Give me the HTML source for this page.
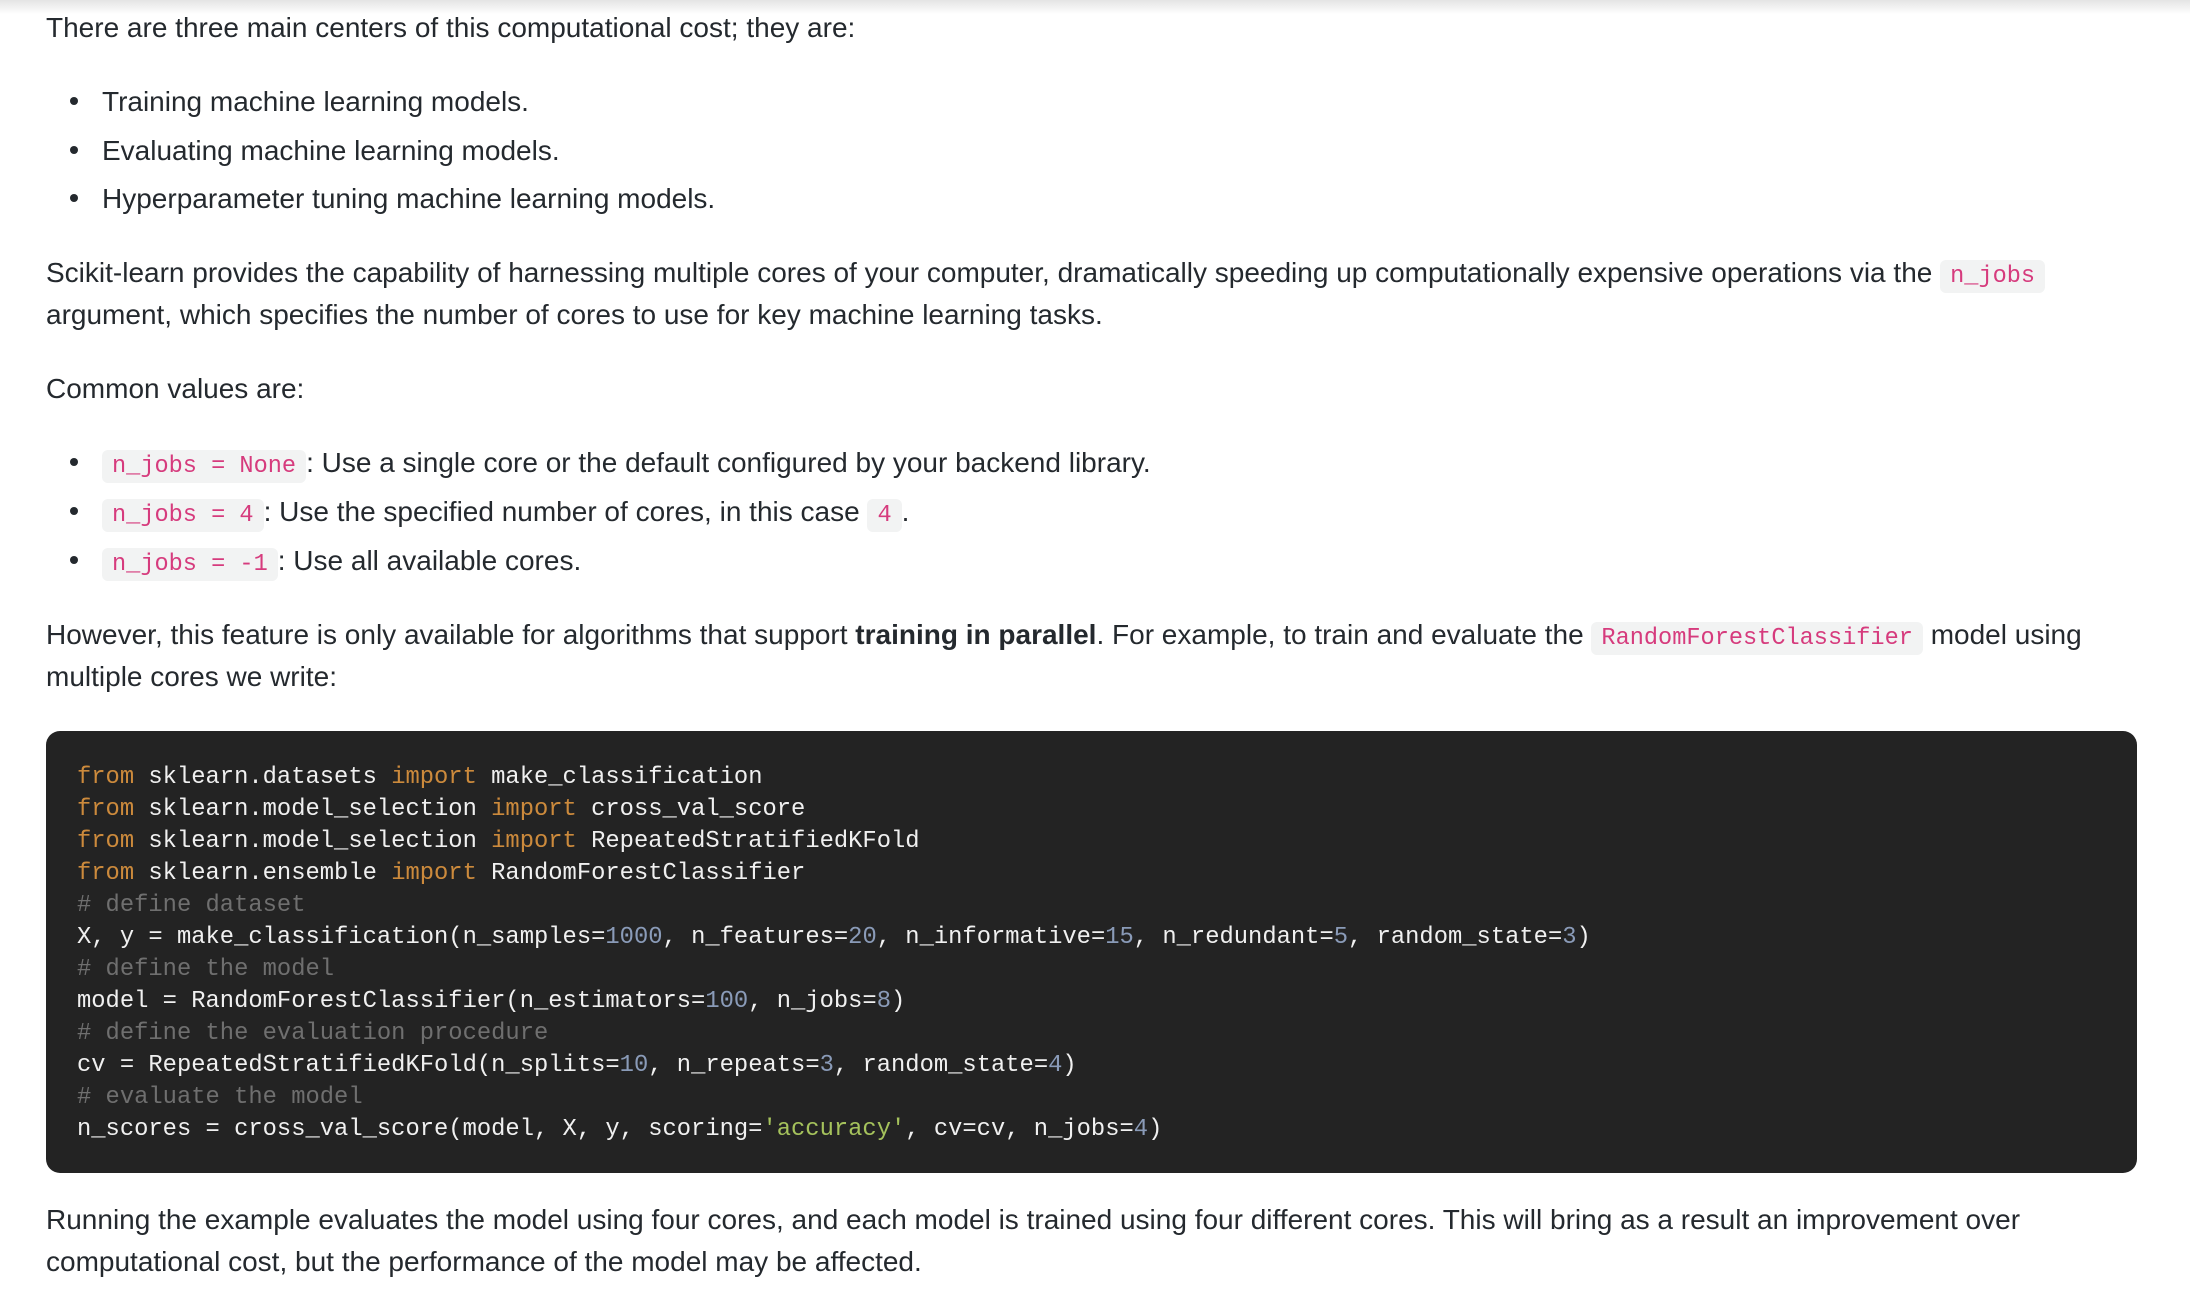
<!DOCTYPE html>
<html><head><meta charset="utf-8"><style>
html,body{margin:0;padding:0;background:#fff;width:2190px;height:1290px;overflow:hidden;position:relative}
body{font-family:"Liberation Sans",Arial,sans-serif;font-size:28px;color:#24292e}
.topshadow{position:absolute;left:0;top:0;width:2190px;height:14px;background:linear-gradient(#e4e4e4,#ffffff)}
.l{position:absolute;left:46px;line-height:42px;white-space:nowrap}
.li{left:102px}
.dot{position:absolute;left:70px;width:8px;height:8px;border-radius:50%;background:#24292e}
code{font-family:"Liberation Mono",monospace;font-size:23.6px;color:#d63b7d;background:#f2f3f3;border-radius:6px;padding:3px 10px}
.code{position:absolute;left:46px;top:731px;width:2091px;height:442px;background:#232323;border-radius:14px}
pre{position:absolute;left:77px;top:762px;margin:0;font-family:"Liberation Mono",monospace;font-size:23.8px;line-height:32px;color:#f0f0f0}
.k{color:#cc8a3c}.n{color:#8a9bb8}.c{color:#6f6f6f}.s{color:#a5c25c}
</style></head><body>
<div class="topshadow"></div>
<div class="l" style="top:7px">There are three main centers of this computational cost; they are:</div>
<div class="dot" style="top:97px"></div><div class="l li" style="top:81px">Training machine learning models.</div>
<div class="dot" style="top:146px"></div><div class="l li" style="top:130px">Evaluating machine learning models.</div>
<div class="dot" style="top:194px"></div><div class="l li" style="top:178px">Hyperparameter tuning machine learning models.</div>
<div class="l" style="top:252px">Scikit-learn provides the capability of harnessing multiple cores of your computer, dramatically speeding up computationally expensive operations via the <code>n_jobs</code></div>
<div class="l" style="top:294px">argument, which specifies the number of cores to use for key machine learning tasks.</div>
<div class="l" style="top:368px">Common values are:</div>
<div class="dot" style="top:458px"></div><div class="l li" style="top:442px"><code>n_jobs = None</code>: Use a single core or the default configured by your backend library.</div>
<div class="dot" style="top:507px"></div><div class="l li" style="top:491px"><code>n_jobs = 4</code>: Use the specified number of cores, in this case <code>4</code>.</div>
<div class="dot" style="top:556px"></div><div class="l li" style="top:540px"><code>n_jobs = -1</code>: Use all available cores.</div>
<div class="l" style="top:614px">However, this feature is only available for algorithms that support <b>training in parallel</b>. For example, to train and evaluate the <code>RandomForestClassifier</code> model using</div>
<div class="l" style="top:656px">multiple cores we write:</div>
<div class="code"></div>
<pre><span class="k">from</span> sklearn.datasets <span class="k">import</span> make_classification
<span class="k">from</span> sklearn.model_selection <span class="k">import</span> cross_val_score
<span class="k">from</span> sklearn.model_selection <span class="k">import</span> RepeatedStratifiedKFold
<span class="k">from</span> sklearn.ensemble <span class="k">import</span> RandomForestClassifier
<span class="c"># define dataset</span>
X, y = make_classification(n_samples=<span class="n">1000</span>, n_features=<span class="n">20</span>, n_informative=<span class="n">15</span>, n_redundant=<span class="n">5</span>, random_state=<span class="n">3</span>)
<span class="c"># define the model</span>
model = RandomForestClassifier(n_estimators=<span class="n">100</span>, n_jobs=<span class="n">8</span>)
<span class="c"># define the evaluation procedure</span>
cv = RepeatedStratifiedKFold(n_splits=<span class="n">10</span>, n_repeats=<span class="n">3</span>, random_state=<span class="n">4</span>)
<span class="c"># evaluate the model</span>
n_scores = cross_val_score(model, X, y, scoring=<span class="s">'accuracy'</span>, cv=cv, n_jobs=<span class="n">4</span>)</pre>
<div class="l" style="top:1199px">Running the example evaluates the model using four cores, and each model is trained using four different cores. This will bring as a result an improvement over</div>
<div class="l" style="top:1241px">computational cost, but the performance of the model may be affected.</div>
</body></html>
